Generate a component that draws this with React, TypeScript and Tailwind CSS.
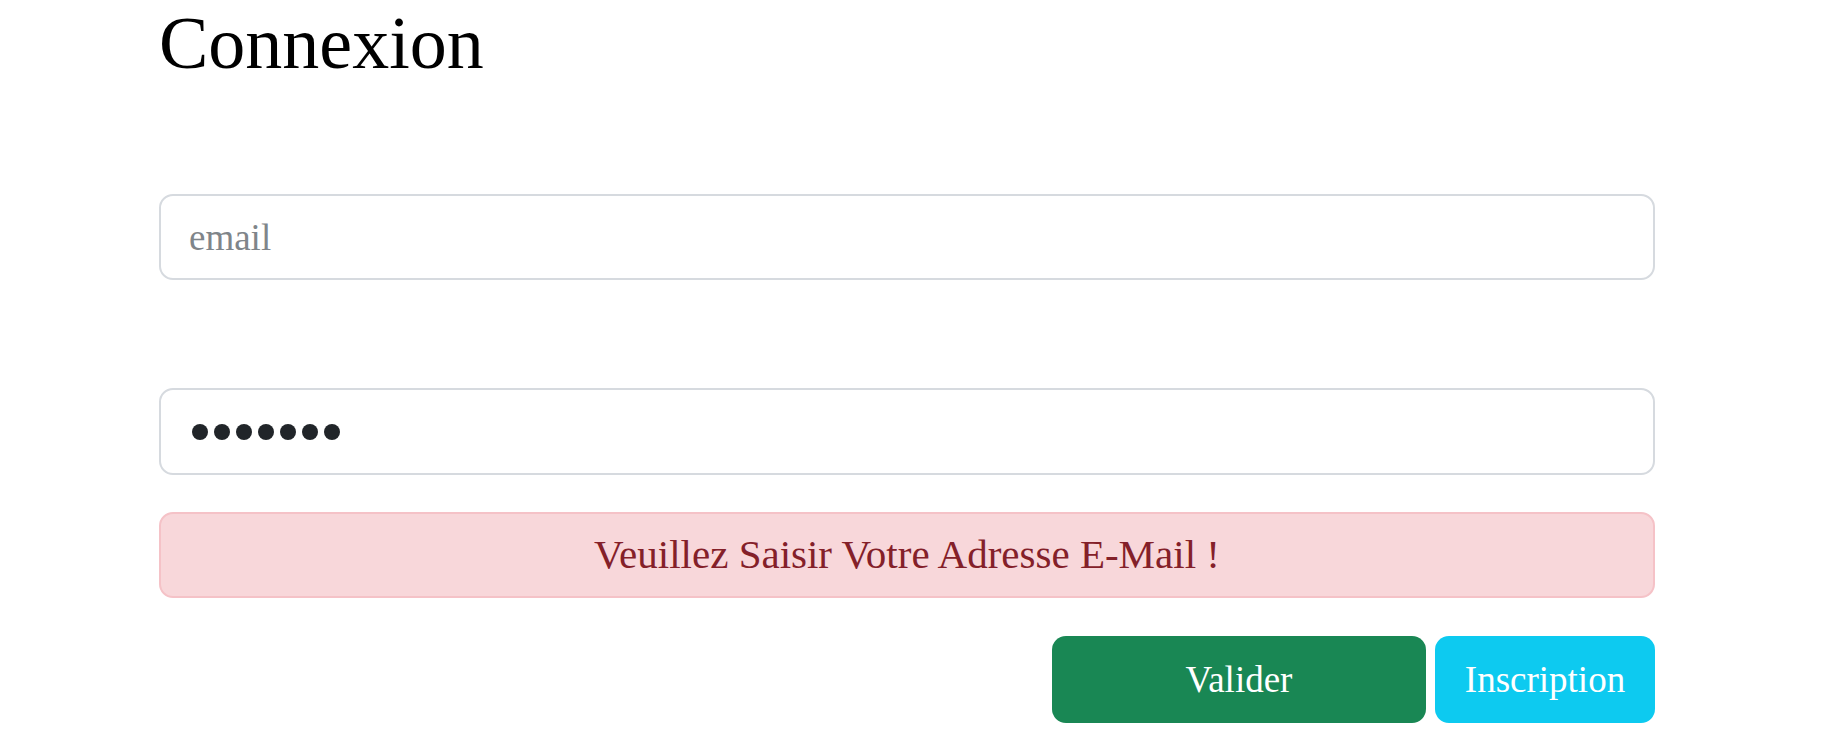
import React from "react";

const serif = "font-['Liberation_Serif','Times_New_Roman',serif]";

export default function App() {
  return (
    <div className={`min-h-screen bg-white ${serif}`}>
      <div className="ml-[159px] w-[1496px] flex flex-col">
        <h1 className="text-[74px] leading-[86px] h-[86px] text-black font-normal m-0">Connexion</h1>

        <input
          type="email"
          placeholder="email"
          className="mt-[108px] h-[86px] w-full rounded-[14px] border-2 border-[#d6dadf] bg-white px-[28px] text-[37px] leading-[1.5] text-[#212529] placeholder:text-[#7f858a] outline-none"
        />

        <div className="mt-[108px] h-[87px] w-full rounded-[14px] border-2 border-[#d6dadf] bg-white pl-[31px] flex items-center gap-[6px]">
          {[0, 1, 2, 3, 4, 5, 6].map((i) => (
            <span key={i} className="block h-[16px] w-[16px] rounded-full bg-[#212529]" />
          ))}
        </div>

        <div className="mt-[37px] h-[86px] w-full rounded-[14px] border-2 border-[#f5c2c7] bg-[#f8d7da] flex items-center justify-center text-[41px] leading-[1.2] text-[#842029]">
          Veuillez Saisir Votre Adresse E-Mail !
        </div>

        <div className="mt-[38px] flex justify-end gap-[9px]">
          <button className="h-[87px] w-[374px] rounded-[14px] bg-[#198754] text-white text-[37px] leading-[1.5] flex items-center justify-center">
            Valider
          </button>
          <button className="h-[87px] w-[220px] rounded-[14px] bg-[#0dcaf0] text-white text-[37px] leading-[1.5] flex items-center justify-center">
            Inscription
          </button>
        </div>
      </div>
    </div>
  );
}
